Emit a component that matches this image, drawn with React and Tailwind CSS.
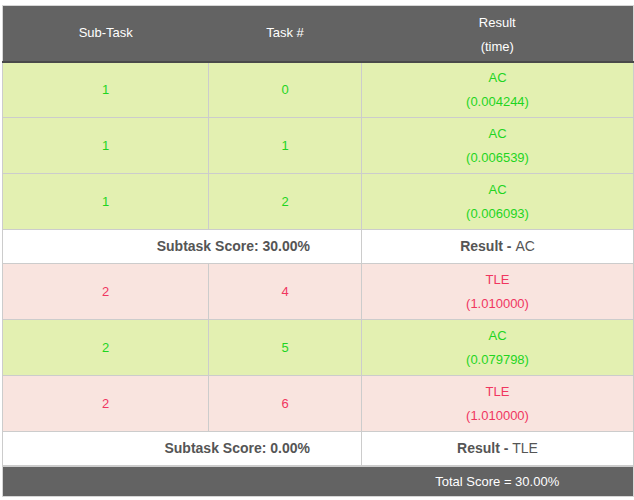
import React from 'react';

const groups = [
  {
    rows: [
      { sub: 1, task: 0, result: 'AC', time: '0.004244' },
      { sub: 1, task: 1, result: 'AC', time: '0.006539' },
      { sub: 1, task: 2, result: 'AC', time: '0.006093' },
    ],
    score: '30.00%',
    verdict: 'AC',
  },
  {
    rows: [
      { sub: 2, task: 4, result: 'TLE', time: '1.010000' },
      { sub: 2, task: 5, result: 'AC', time: '0.079798' },
      { sub: 2, task: 6, result: 'TLE', time: '1.010000' },
    ],
    score: '0.00%',
    verdict: 'TLE',
  },
];

const rowStyle = (result) =>
  result === 'AC' ? 'bg-[#e3f0b1] text-[#1fd51f]' : 'bg-[#f9e4df] text-[#f0365f]';

const App = () => {
  return (
    <div className="bg-white pt-[5px] pl-[2px] pr-[1px] pb-[2px] font-['Liberation_Sans',Arial,sans-serif]">
      <table className="w-[631px] table-fixed border-collapse border border-[#d6d6d6] text-[13px] text-center">
        <colgroup>
          <col className="w-[206px]" />
          <col className="w-[153px]" />
          <col className="w-[272px]" />
        </colgroup>
        <thead>
          <tr className="bg-[#636363] text-white border-b-2 border-[#4a4a4a]">
            <th className="font-normal h-[56px] leading-6">Sub-Task</th>
            <th className="font-normal leading-6">Task #</th>
            <th className="font-normal leading-6 pt-[3px]">
              Result
              <br />
              (time)
            </th>
          </tr>
        </thead>
        <tbody>
          {groups.map((group, gi) => (
            <React.Fragment key={gi}>
              {group.rows.map((row) => (
                <tr key={row.task} className={rowStyle(row.result)}>
                  <td className="border border-[#cccccc] h-[56px] leading-6">{row.sub}</td>
                  <td className="border border-[#cccccc] leading-6">{row.task}</td>
                  <td className="border border-[#cccccc] leading-6 py-[3px]">
                    {row.result}
                    <br />
                    ({row.time})
                  </td>
                </tr>
              ))}
              <tr className="bg-white text-[#555555] text-[14px]">
                <td colSpan={2} className="border border-[#cccccc] h-[34px] text-right pr-[51px] font-bold">
                  Subtask Score: {group.score}
                </td>
                <td className="border border-[#cccccc]">
                  <span className="font-bold">Result - </span>
                  {group.verdict}
                </td>
              </tr>
            </React.Fragment>
          ))}
        </tbody>
        <tfoot>
          <tr className="bg-[#636363] text-white">
            <td colSpan={2} className="h-[31px] border-t-2 border-[#cccccc]"></td>
            <td className="border-t-2 border-[#cccccc]">Total Score = 30.00%</td>
          </tr>
        </tfoot>
      </table>
    </div>
  );
};

export default App;
